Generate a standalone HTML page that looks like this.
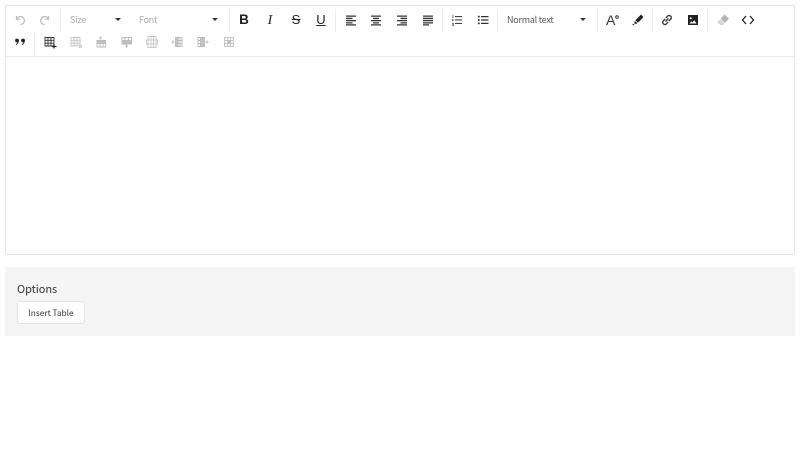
<!DOCTYPE html>
<html><head><meta charset="utf-8"><style>
html,body{margin:0;padding:0;background:#fff;width:800px;height:450px;overflow:hidden;font-family:"Noto Sans CJK JP","Liberation Sans",sans-serif}
.a{position:absolute}
.sep{position:absolute;width:1px;background:#ececec}
svg.i{position:absolute;width:14px;height:14px}
.t{position:absolute;font-size:9px;letter-spacing:-.25px;line-height:14px;white-space:nowrap}
.car{position:absolute;width:0;height:0;border-left:3px solid transparent;border-right:3px solid transparent;border-top:3px solid #333}
</style></head><body>
<div class="a" style="left:5px;top:5px;width:788px;height:248px;border:1px solid #e4e4e4;border-radius:2px"></div>
<div class="a" style="left:6px;top:56px;width:788px;height:1px;background:#e9e9e9"></div>
<div class="sep" style="left:60px;top:9px;height:23px"></div>
<div class="sep" style="left:229px;top:9px;height:23px"></div>
<div class="sep" style="left:335px;top:9px;height:23px"></div>
<div class="sep" style="left:442px;top:9px;height:23px"></div>
<div class="sep" style="left:497px;top:9px;height:23px"></div>
<div class="sep" style="left:597px;top:9px;height:23px"></div>
<div class="sep" style="left:652px;top:9px;height:23px"></div>
<div class="sep" style="left:707px;top:9px;height:23px"></div>
<div class="sep" style="left:34px;top:32px;height:23px"></div>

<svg class="i" style="left:13px;top:13px" viewBox="0 0 14 14" fill="none" stroke="#bbb" stroke-width="1.2"><path d="M3.500 3v3.200h3.200M3.700 6A4 4 0 1 1 7.500 11.500"/></svg>
<svg class="i" style="left:38px;top:13px" viewBox="0 0 14 14" fill="none" stroke="#bbb" stroke-width="1.2"><path d="M10.500 3v3.200H7.300M10.300 6A4 4 0 1 0 6.500 11.500"/></svg>
<div class="t" style="left:70px;top:13px;color:#aaa">Size</div><div class="car" style="left:115px;top:18px"></div>
<div class="t" style="left:139px;top:13px;color:#aaa">Font</div><div class="car" style="left:212px;top:18px"></div>
<div class="t" style="left:237px;top:12px;width:14px;text-align:center;font:700 13.500px/16px 'Liberation Sans',sans-serif;letter-spacing:0;color:#222">B</div>
<div class="t" style="left:263px;top:13px;width:14px;text-align:center;font:italic 400 14px/16px 'Liberation Serif',serif;letter-spacing:0;color:#222">I</div>
<div class="t" style="left:289px;top:12px;width:14px;text-align:center;font:400 13px/16px 'Liberation Sans',sans-serif;letter-spacing:0;color:#222"><s>S</s></div>
<div class="t" style="left:314px;top:12px;width:14px;text-align:center;font:400 13px/16px 'Liberation Sans',sans-serif;letter-spacing:0;color:#222;text-decoration:underline">U</div>

<svg class="i" style="left:344px;top:13px" viewBox="0 0 14 14" fill="#333"><path d="M2 2.500h10v1.300H2zM2 4.800h6.500v1.300H2zM2 7h10v1.300H2zM2 9.200h6.500v1.300H2zM2 11.200h10v1.300H2z"/></svg>
<svg class="i" style="left:369px;top:13px" viewBox="0 0 14 14" fill="#333"><path d="M2 2.500h10v1.300H2zM4 4.800h6v1.300H4zM2 7h10v1.300H2zM4 9.200h6v1.300H4zM2 11.200h10v1.300H2z"/></svg>
<svg class="i" style="left:395px;top:13px" viewBox="0 0 14 14" fill="#333"><path d="M2 2.500h10v1.300H2zM5.500 4.800H12v1.300H5.500zM2 7h10v1.300H2zM5.500 9.200H12v1.300H5.500zM2 11.200h10v1.300H2z"/></svg>
<svg class="i" style="left:421px;top:13px" viewBox="0 0 14 14" fill="#333"><path d="M2 2.500h10v1.300H2zM2 4.800h10v1.300H2zM2 7h10v1.300H2zM2 9.200h10v1.300H2zM2 11.200h6v1.300H2z"/></svg>
<svg class="i" style="left:450px;top:13px" viewBox="0 0 14 14" fill="#444"><path d="M5 3h7v1.100H5zM5 6.400h7v1.100H5zM5 9.900h7V11H5zM2.500 2h.8v3h-.8zM2 6.300h1.700v.6H2.800v.6h.9v.6H2zM2 10h1.700v3H2v-.6h1v-.5h-.6v-.6H3v-.6H2z"/></svg>
<svg class="i" style="left:476px;top:13px" viewBox="0 0 14 14" fill="#333"><path d="M5 3h7.500v1.200H5zM5 6.400h7.500v1.200H5zM5 9.800h7.500V11H5z"/><circle cx="2.800" cy="3.600" r="1"/><circle cx="2.800" cy="7" r="1"/><circle cx="2.800" cy="10.400" r="1"/></svg>
<div class="t" style="left:507px;top:13px;color:#555">Normal text</div><div class="car" style="left:580px;top:18px"></div>

<div class="t" style="left:606px;top:12px;font:400 14px/16px 'Liberation Sans',sans-serif;letter-spacing:0;color:#333">A</div>
<svg class="i" style="left:611px;top:12px" viewBox="0 0 14 14" fill="none" stroke="#333" stroke-width="1"><circle cx="6" cy="5" r="1.300"/></svg>
<svg class="i" style="left:631px;top:13px" viewBox="0 0 14 14" fill="#222"><path d="M10 1.500l2.500 2.500-5.500 5.800-2.600-2.600zM3.800 7.800l2.500 2.500-1 .6-2-.3zM2 11l1.500.1-.8 1H1.200z"/></svg>
<svg class="i" style="left:660px;top:13px" viewBox="0 0 14 14" fill="none" stroke="#333" stroke-width="1.300"><path d="M5.500 8.500l3-3M5.200 6L3 8.200a2.200 2.200 0 0 0 3 3L8.200 9M8.800 8L11 5.800a2.200 2.200 0 0 0-3-3L5.800 5"/></svg>
<svg class="i" style="left:686px;top:13px" viewBox="0 0 14 14"><path fill="#222" fill-rule="evenodd" d="M2.500 2h9a.5.5 0 0 1 .5.5v9a.5.5 0 0 1-.5.500h-9a.5.5 0 0 1-.5-.5v-9a.5.5 0 0 1 .5-.5zM3.500 10.500h7L8.300 7.200 6.500 9.500 5.300 8.200zM4.800 4.200a1 1 0 1 0 0 2 1 1 0 0 0 0-2z"/></svg>
<svg class="i" style="left:716px;top:13px" viewBox="0 0 14 14" fill="#b5b5b5"><path d="M8.500 1.500l4.500 4-4 4.500-4.500-4.200z"/><path d="M4 6.200l4.500 4-1.800 2H4.500L1.200 9.200z" fill="#d5d5d5"/></svg>
<svg class="i" style="left:741px;top:13px" viewBox="0 0 14 14" fill="none" stroke="#222" stroke-width="1.300"><path d="M5 3L1.500 7 5 11M9 3l3.500 4L9 11"/></svg>

<svg class="i" style="left:13px;top:35px" viewBox="0 0 14 14" fill="#222"><circle cx="4" cy="5.500" r="1.900"/><circle cx="10" cy="5.500" r="1.900"/><path d="M4.700 4.500h1.200c.1 2.500-.7 4.500-2.800 5.500l-.4-.6c1.400-.9 1.900-2 2-3.500zM10.700 4.500h1.200c.1 2.500-.7 4.500-2.800 5.500l-.4-.6c1.400-.9 1.900-2 2-3.500z"/></svg>
<svg class="i" style="left:43px;top:35px" viewBox="0 0 14 14" fill="none" stroke="#333" stroke-width=".9"><path d="M2 2.500h9v8.500H2zM2 5.300h9M2 8.200h9M5 2.500V11M8 2.500V11" /><path d="M11 9v4.500M9 11.500h4.500" stroke="#222" stroke-width="1.200"/></svg>
<svg class="i" style="left:69px;top:35px" viewBox="0 0 14 14" fill="none" stroke="#c4c4c4" stroke-width=".9"><path d="M2 2.500h9v8.500H2zM2 5.300h9M2 8.200h9M5 2.500V11M8 2.500V11M10 10l3 3M13 10l-3 3"/></svg>
<svg class="i" style="left:94px;top:35px" viewBox="0 0 14 14" fill="none" stroke="#bbb" stroke-width=".9"><path d="M3 5.500h8.500v6.500H3zM3 8.500h8.500M6 5.500V12M9 5.500V12"/><path d="M3 6h8.500v2.300H3z" fill="#c4c4c4"/><path d="M6.500 1.500v3M5 3h3" stroke-width="1"/></svg>
<svg class="i" style="left:120px;top:35px" viewBox="0 0 14 14" fill="none" stroke="#bbb" stroke-width=".9"><path d="M2 2.500h9.500v6.500H2zM2 5.500h9.500M5 2.500V9M8.500 2.500V9"/><path d="M2 6h9.500v2.500H2z" fill="#c4c4c4"/><path d="M6.500 9.500v3M5 11h3" stroke-width="1"/></svg>
<svg class="i" style="left:145px;top:35px" viewBox="0 0 14 14" fill="none" stroke="#c8c8c8" stroke-width=".9"><path d="M3 1.500h8v11H3zM1.500 5h11v4h-11zM6 1.500v11M8.500 1.500v11"/></svg>
<svg class="i" style="left:170px;top:35px" viewBox="0 0 14 14" fill="none" stroke="#bbb" stroke-width=".9"><path d="M5.500 2.500H12v9H5.500zM8 2.500v9M10 2.500v9M5.500 5.500H12M5.500 8.500H12"/><path d="M5.500 2.500H8v9H5.500z" fill="#c4c4c4"/><path d="M1.500 7h3M3 5.500v3" stroke-width="1"/></svg>
<svg class="i" style="left:196px;top:35px" viewBox="0 0 14 14" fill="none" stroke="#bbb" stroke-width=".9"><path d="M2 2.500h6.500v9H2zM4.500 2.500v9M2 5.500h6.500M2 8.500h6.500"/><path d="M4.500 2.500h4v9h-4z" fill="#c4c4c4"/><path d="M9.500 7h3M11 5.500v3" stroke-width="1"/></svg>
<svg class="i" style="left:222px;top:35px" viewBox="0 0 14 14" fill="none" stroke="#c4c4c4" stroke-width=".9"><path d="M2.500 2.500h9v9h-9zM5.500 2.500v9M8.500 2.500v9M2.500 5.500h9M2.500 8.500h9"/><path d="M6 5.500h2.500v3H6z" fill="#bbb"/></svg>

<div class="a" style="left:5px;top:267px;width:790px;height:69px;background:#f5f5f5"></div>
<div class="t" style="left:17px;top:281px;font-size:11px;letter-spacing:-.05px;line-height:16px;color:#333">Options</div>
<div class="a" style="left:17px;top:301px;width:66px;height:21px;background:#fff;border:1px solid #e4e4e4;border-radius:3px;font-size:8.300px;line-height:22px;text-align:center;color:#333">Insert Table</div>
</body></html>
